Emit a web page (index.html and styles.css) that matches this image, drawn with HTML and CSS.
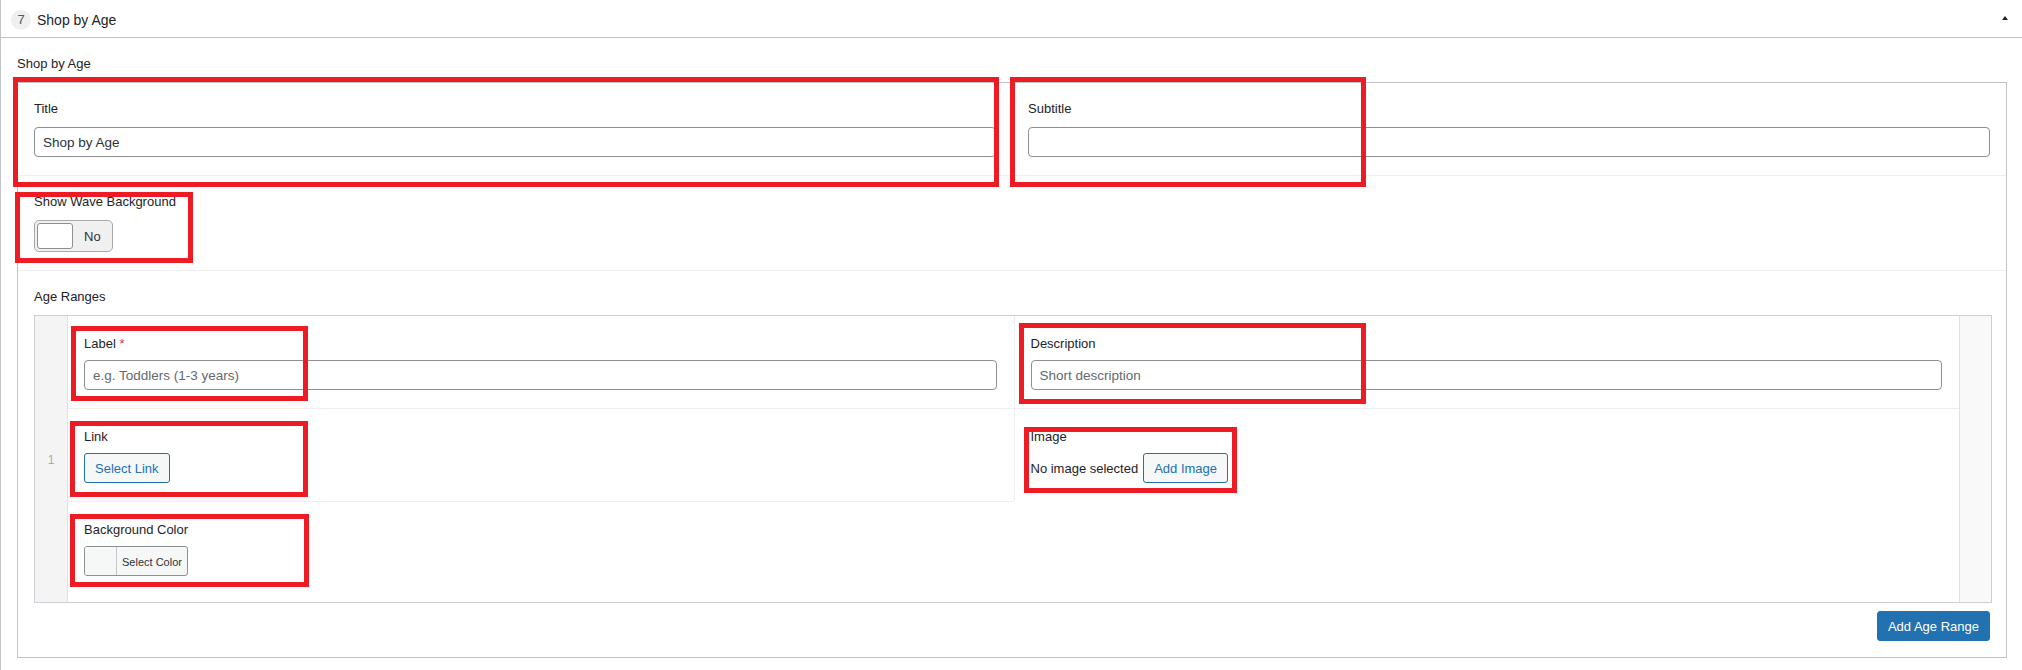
FILE: index.html
```html
<!DOCTYPE html>
<html lang="en">
<head>
<meta charset="utf-8">
<title>Shop by Age</title>
<link rel="stylesheet" href="styles.css">
</head>
<body>
<div class="postbox">
  <div class="postbox-header">
    <span class="badge">7</span>
    <span class="postbox-title">Shop by Age</span>
    <span class="toggle-arrow"></span>
  </div>
  <div class="postbox-body">
    <div class="group-label">Shop by Age</div>
    <div class="group">
      <div class="row two-col">
        <div class="field">
          <label class="field-label">Title</label>
          <input class="text-input" type="text" value="Shop by Age">
        </div>
        <div class="field">
          <label class="field-label">Subtitle</label>
          <input class="text-input" type="text" value="">
        </div>
      </div>
      <div class="row">
        <div class="field">
          <div class="field-label">Show Wave Background</div>
          <div class="switch"><span class="switch-knob"></span><span class="switch-text">No</span></div>
        </div>
      </div>
      <div class="row">
        <div class="field repeater-field">
          <div class="field-label">Age Ranges</div>
          <div class="repeater">
            <div class="order">1</div>
            <div class="sub-fields">
              <div class="sub-field">
                <label class="field-label sub-label">Label <span class="required">*</span></label>
                <input class="text-input" type="text" placeholder="e.g. Toddlers (1-3 years)">
              </div>
              <div class="sub-field side">
                <label class="field-label sub-label">Description</label>
                <input class="text-input" type="text" placeholder="Short description">
              </div>
              <div class="sub-field ruled">
                <div class="field-label sub-label">Link</div>
                <button class="button" type="button">Select Link</button>
              </div>
              <div class="sub-field side ruled">
                <div class="field-label sub-label">Image</div>
                <div class="image-row"><span class="no-image">No image selected</span><button class="button" type="button">Add Image</button></div>
              </div>
              <div class="sub-field ruled last">
                <div class="field-label sub-label">Background Color</div>
                <button class="color-btn" type="button"><span class="swatch"></span><span class="color-text">Select Color</span></button>
              </div>
            </div>
            <div class="remove-col"></div>
          </div>
          <div class="repeater-footer"><button class="button-primary" type="button">Add Age Range</button></div>
        </div>
      </div>
    </div>
  </div>
</div>
<div class="mark mark-title"></div>
<div class="mark mark-subtitle"></div>
<div class="mark mark-wave"></div>
<div class="mark mark-label"></div>
<div class="mark mark-desc"></div>
<div class="mark mark-link"></div>
<div class="mark mark-image"></div>
<div class="mark mark-color"></div>
</body>
</html>
```

FILE: styles.css
```css
* { box-sizing: border-box; }
html, body { margin: 0; padding: 0; background: #fff; overflow: hidden; }
body {
  position: relative;
  width: 2022px;
  height: 670px;
  font-family: "Segoe UI", "Liberation Sans", Arial, sans-serif;
  font-size: 13px;
  color: #1d2327;
}
.postbox { border-left: 1px solid #c3c4c7; min-height: 670px; }
.postbox-header {
  height: 38px;
  border-bottom: 1px solid #c3c4c7;
  display: flex;
  align-items: center;
  padding: 2px 14px 0 10px;
}
.badge {
  width: 20px; height: 20px;
  border-radius: 50%;
  background: #f0f0f1;
  color: #50575e;
  font-size: 13px;
  display: flex; align-items: center; justify-content: center;
  margin-right: 6px;
}
.postbox-title { font-size: 14px; color: #1d2327; }
.toggle-arrow {
  margin-left: auto;
  width: 0; height: 0;
  border-left: 3px solid transparent;
  border-right: 3px solid transparent;
  border-bottom: 4px solid #1d2327;
  margin-bottom: 4px;
}
.postbox-body { padding: 15px 15px 14px 16px; }
.group-label { line-height: 20px; padding-top: 1px; margin-bottom: 8px; }
.group { border: 1px solid #c3c4c7; }
.row + .row { border-top: 1px solid #eeeeee; }
.two-col { display: grid; grid-template-columns: 1fr 1fr; }
.field { padding: 15px 16px 18px 16px; }
.field-label { display: block; line-height: 20px; padding-top: 1px; margin-bottom: 8px; font-size: 13px; color: #1d2327; }
.sub-label { padding-top: 2px; margin-bottom: 6px; }
.required { color: #d63638; }
.text-input {
  display: block;
  width: 100%;
  height: 30px;
  margin: 0;
  border: 1px solid #8c8f94;
  border-radius: 4px;
  padding: 1px 8px 0;
  font-family: inherit;
  font-size: 13.5px;
  color: #2c3338;
  background: #fff;
}
.text-input::placeholder { color: #646970; opacity: 1; }
.switch {
  display: flex;
  align-items: center;
  width: 79px;
  height: 32px;
  border: 1px solid #a7aaad;
  border-radius: 5px;
  background: #f0f0f1;
  padding: 0 2px;
}
.switch-knob {
  width: 36px; height: 26px;
  background: #fff;
  border: 1px solid #8c8f94;
  border-radius: 3px;
}
.switch-text { margin-left: 11px; padding-top: 1px; color: #2c3338; }
.repeater-field { padding: 15px 14px 16px 16px; }
.repeater { display: flex; border: 1px solid #ccd0d4; }
.order {
  width: 33px; flex: none;
  background: #f4f4f4;
  border-right: 1px solid #e1e1e1;
  display: flex; align-items: center; justify-content: center;
  padding-top: 2px;
  color: #a7aaad;
  font-size: 12px;
}
.sub-fields { flex: 1; display: grid; grid-template-columns: 1fr 1fr; align-content: start; }
.sub-field { padding: 16px 17px 18px 16px; }
.sub-field.side { border-left: 1px solid #eeeeee; }
.sub-field.ruled { border-top: 1px solid #eeeeee; }
.sub-field.last { padding-bottom: 24px; }
.remove-col { width: 32px; flex: none; background: #f9f9f9; border-left: 1px solid #e1e1e1; }
.button {
  display: inline-flex; align-items: center;
  height: 30px;
  margin: 0;
  padding: 1px 10px 0;
  border: 1px solid #2271b1;
  border-radius: 3px;
  background: #f6f7f7;
  color: #2271b1;
  font-family: inherit;
  font-size: 13px;
}
.image-row { display: flex; align-items: center; }
.no-image { margin-right: 5px; padding-top: 1px; color: #1d2327; }
.color-btn {
  display: inline-flex; align-items: stretch;
  height: 30px;
  margin: 0; padding: 0;
  border: 1px solid #8c8f94;
  border-radius: 3px;
  background: #f6f7f7;
  font-family: inherit;
  overflow: hidden;
}
.swatch { width: 32px; border-right: 1px solid #c3c4c7; background: #f6f7f7; }
.color-text { padding: 1px 5px 0; font-size: 11px; line-height: 28px; color: #2c3338; }
.repeater-footer { display: flex; justify-content: flex-end; margin-top: 8px; padding-right: 2px; }
.button-primary {
  height: 30px;
  margin: 0;
  padding: 1px 10px 0;
  border: 1px solid #2271b1;
  border-radius: 3px;
  background: #2271b1;
  color: #fff;
  font-family: inherit;
  font-size: 13px;
}
.mark { position: absolute; border: 5px solid #ed1c24; }
.mark-title { left: 13px; top: 77px; width: 986px; height: 110px; }
.mark-subtitle { left: 1010px; top: 77px; width: 356px; height: 110px; }
.mark-wave { left: 15px; top: 192px; width: 178px; height: 71px; }
.mark-label { left: 71px; top: 326px; width: 237px; height: 75px; }
.mark-desc { left: 1019px; top: 323px; width: 347px; height: 81px; }
.mark-link { left: 70px; top: 421px; width: 238px; height: 76px; }
.mark-image { left: 1024px; top: 427px; width: 213px; height: 66px; }
.mark-color { left: 70px; top: 514px; width: 239px; height: 73px; }
```
